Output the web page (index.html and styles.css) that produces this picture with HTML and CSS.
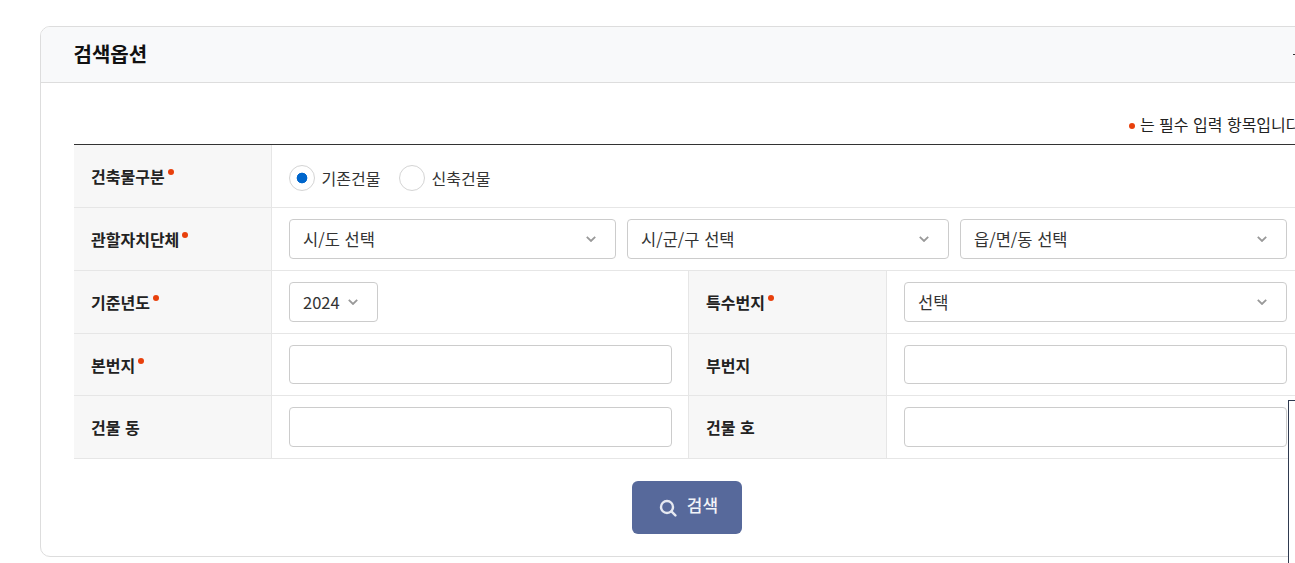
FILE: index.html
```html
<!DOCTYPE html>
<html lang="ko">
<head>
<meta charset="utf-8">
<title>검색옵션</title>
<link rel="stylesheet" href="styles.css">
</head>
<body>
<section class="card">
  <header class="card-head">
    <h2 class="card-title">검색옵션</h2>
    <span class="collapse-icon"></span>
  </header>
  <div class="card-body">
    <p class="legend"><span class="dot legend-dot"></span>는 필수 입력 항목입니다.</p>
    <table class="form-table">
      <colgroup><col class="c-th"><col class="c-td"><col class="c-th"><col class="c-rest"></colgroup>
      <tbody>
        <tr>
          <th>건축물구분<span class="dot"></span></th>
          <td colspan="3">
            <div class="radios">
              <label class="radio"><input type="radio" name="kind" checked><span>기존건물</span></label>
              <label class="radio"><input type="radio" name="kind"><span>신축건물</span></label>
            </div>
          </td>
        </tr>
        <tr>
          <th>관할자치단체<span class="dot"></span></th>
          <td colspan="3">
            <div class="selects">
              <div class="select sel-a"><span>시/도 선택</span><svg class="chev" viewBox="0 0 10 6"><path d="M.8.8 5 5l4.2-4.2"/></svg></div>
              <div class="select sel-b"><span>시/군/구 선택</span><svg class="chev" viewBox="0 0 10 6"><path d="M.8.8 5 5l4.2-4.2"/></svg></div>
              <div class="select sel-a"><span>읍/면/동 선택</span><svg class="chev" viewBox="0 0 10 6"><path d="M.8.8 5 5l4.2-4.2"/></svg></div>
            </div>
          </td>
        </tr>
        <tr>
          <th>기준년도<span class="dot"></span></th>
          <td>
            <div class="select sel-year"><span>2024</span><svg class="chev" viewBox="0 0 10 6"><path d="M.8.8 5 5l4.2-4.2"/></svg></div>
          </td>
          <th>특수번지<span class="dot"></span></th>
          <td>
            <div class="select"><span>선택</span><svg class="chev" viewBox="0 0 10 6"><path d="M.8.8 5 5l4.2-4.2"/></svg></div>
          </td>
        </tr>
        <tr class="row-short">
          <th>본번지<span class="dot"></span></th>
          <td><input class="text" type="text" aria-label="본번지"></td>
          <th>부번지</th>
          <td><input class="text" type="text" aria-label="부번지"></td>
        </tr>
        <tr>
          <th>건물 동</th>
          <td><input class="text" type="text" aria-label="건물 동"></td>
          <th>건물 호</th>
          <td><input class="text" type="text" aria-label="건물 호"></td>
        </tr>
      </tbody>
    </table>
    <div class="actions">
      <button class="btn" type="button">
        <svg class="btn-icon" viewBox="0 0 18 18"><circle cx="8" cy="8" r="6"/><path d="m12.4 12.4 4 4"/></svg>
        <span class="btn-label">검색</span>
      </button>
    </div>
  </div>
</section>
<div class="popup"></div>
</body>
</html>
```
FILE: styles.css
```css
* { box-sizing: border-box; }
html, body { height: 100%; }
body {
  margin: 0;
  overflow: hidden;
  background: #fff;
  color: #222;
  font-family: "Noto Sans CJK KR", "Noto Sans", sans-serif;
  font-size: 16px;
  padding: 26px 0 0 40px;
}
.card {
  width: 1298px;
  height: 531px;
  border: 1px solid #ddd;
  border-radius: 10px;
  overflow: hidden;
}
.card-head {
  height: 56px;
  display: flex;
  align-items: center;
  justify-content: space-between;
  padding: 0 33px 2px 32.5px;
  background: #f8f9fa;
  border-bottom: 1px solid #ddd;
}
.card-title {
  margin: 0;
  font-size: 20px;
  font-weight: 700;
  color: #111;
  line-height: 1;
}
.collapse-icon {
  width: 11px;
  height: 1px;
  background: #333;
  margin-top: 1px;
}
.card-body { padding: 0 33px; }
.legend {
  height: 61px;
  margin: 0 -1px 0 0;
  padding-bottom: 8px;
  display: flex;
  align-items: flex-end;
  justify-content: flex-end;
  font-size: 16px;
  line-height: 24px;
  color: #222;
}
.dot {
  display: inline-block;
  width: 6px;
  height: 6px;
  border-radius: 50%;
  background: #e8400c;
  margin-left: 3px;
  vertical-align: 8px;
}
.legend-dot { margin: 0 5px 7px 0; vertical-align: baseline; }
.form-table {
  width: 1230px;
  table-layout: fixed;
  border-collapse: separate;
  border-spacing: 0;
  border-top: 1px solid #333;
}
.c-th { width: 198px; }
.c-td { width: 417px; }
.form-table th,
.form-table td {
  border-bottom: 1px solid #e6e6e6;
  padding: 11px 16px 11px 17px;
  height: 63px;
}
.form-table th {
  background: #f7f7f7;
  border-right: 1px solid #e6e6e6;
  text-align: left;
  font-size: 16px;
  font-weight: 700;
  color: #222;
}
.form-table td { background: #fff; }
.form-table td:not(:last-child) { border-right: 1px solid #e6e6e6; }
.form-table td:last-child { padding-right: 17px; }
.row-short th, .row-short td { height: 62px; }
.row-short .text { height: 39px; }
.radios { display: flex; gap: 18.6px; height: 40px; padding-top: 3px; align-items: center; }
.radio { display: flex; align-items: center; gap: 6.5px; color: #333; font-size: 16px; }
.radio input {
  appearance: none;
  width: 26px;
  height: 26px;
  margin: 0;
  border: 1px solid #d4d4d4;
  border-radius: 50%;
  background: #fff;
}
.radio input:checked {
  background: radial-gradient(circle, #06c 0 5px, #fff 5.7px);
}
.selects { display: flex; gap: 11px; }
.select {
  height: 40px;
  display: flex;
  align-items: center;
  justify-content: space-between;
  padding: 0 19px 0 13px;
  border: 1px solid #ccc;
  border-radius: 4px;
  background: #fff;
  color: #333;
  font-size: 16.5px;
}
.sel-a { width: 327px; }
.sel-b { width: 322px; }
.sel-year { width: 89px; }
.chev { width: 10px; height: 6px; fill: none; stroke: #999; stroke-width: 1.8; }
.text {
  display: block;
  width: 100%;
  height: 40px;
  border: 1px solid #ccc;
  border-radius: 4px;
  background: #fff;
}
.actions { display: flex; justify-content: center; padding: 22px 4px 0 0; }
.btn {
  width: 110px;
  height: 53px;
  display: flex;
  align-items: center;
  justify-content: center;
  gap: 10px;
  padding: 0 0 0 3px;
  border: 0;
  border-radius: 6px;
  background: #57699b;
  color: #f2f4f8;
  font-family: inherit;
  font-size: 17px;
  font-weight: 500;
}
.btn-label { margin-top: -6px; }
.btn-icon { width: 18px; height: 18px; fill: none; stroke: #e6e9f1; stroke-width: 2.4; stroke-linecap: round; }
.popup {
  position: absolute;
  left: 1288px;
  top: 400px;
  width: 400px;
  height: 300px;
  background: #fff;
  border: 1px solid #2f3a50;
}
```
